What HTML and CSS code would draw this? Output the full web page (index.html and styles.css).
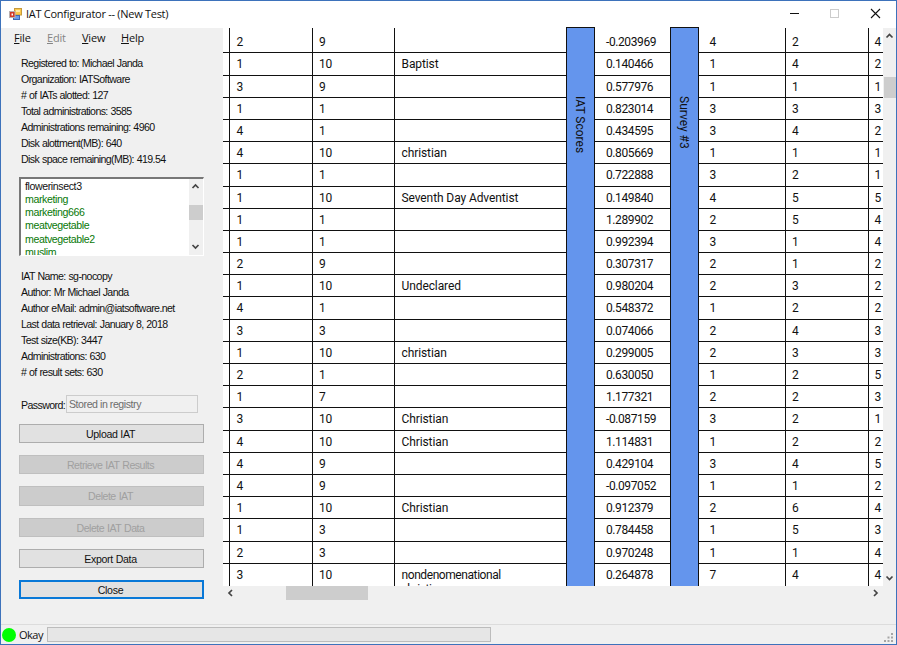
FILE: index.html
```html
<!DOCTYPE html>
<html lang="en">
<head>
<meta charset="utf-8">
<title>IAT Configurator</title>
<link rel="stylesheet" href="styles.css">
</head>
<body>
<div class="window">
  <header class="titlebar">
    <svg class="app-icon" width="13" height="13" viewBox="0 0 13 13">
      <rect x="5.5" y="0.5" width="7" height="6.500" fill="#fbc84c" stroke="#c59a3c"/>
      <rect x="7" y="2" width="4" height="2" fill="#ffe9a8"/>
      <rect x="4.500" y="7.500" width="6" height="4" fill="#6a9bea" stroke="#3c68b4"/>
      <rect x="0.5" y="3.5" width="5.500" height="6" fill="#d33a28" stroke="#b9b0b0"/>
      <rect x="2.500" y="5.500" width="1.500" height="2" fill="#fff"/>
    </svg>
    <span class="title">IAT Configurator -- (New Test)</span>
    <svg class="controls" width="100" height="26" viewBox="0 0 100 26" fill="none">
      <path d="M0 12.5H9" stroke="#111"/>
      <rect x="40.5" y="8.5" width="8" height="8" stroke="#ccc"/>
      <path d="M81 8L90 17M90 8L81 17" stroke="#111" stroke-width="1.1"/>
    </svg>
  </header>
  <main class="body">
    <aside class="side">
      <nav class="menu"><span><u>F</u>ile</span><span class="off"><u>E</u>dit</span><span><u>V</u>iew</span><span><u>H</u>elp</span></nav>
      <div class="info account">
        <p>Registered to: Michael Janda</p><p>Organization: IATSoftware</p><p># of IATs alotted: 127</p><p>Total administrations: 3585</p><p>Administrations remaining: 4960</p><p>Disk alottment(MB): 640</p><p>Disk space remaining(MB): 419.54</p>
      </div>
      <div class="list">
        <div class="items"><p class="sel">flowerinsect3</p><p>marketing</p><p>marketing666</p><p>meatvegetable</p><p>meatvegetable2</p><p>muslim</p></div>
        <div class="list-scroll">
          <svg width="13" height="10" viewBox="0 0 13 10"><path d="M3.500 7L6.500 4L9.500 7" class="arrow"/></svg>
          <i></i>
          <svg width="13" height="10" viewBox="0 0 13 10"><path d="M3.500 3L6.500 6L9.500 3" class="arrow"/></svg>
        </div>
      </div>
      <div class="info details">
        <p>IAT Name: sg-nocopy</p><p>Author: Mr Michael Janda</p><p>Author eMail: admin@iatsoftware.net</p><p>Last data retrieval: January 8, 2018</p><p>Test size(KB): 3447</p><p>Administrations: 630</p><p># of result sets: 630</p>
      </div>
      <div class="password"><span>Password:</span><div class="field">Stored in registry</div></div>
      <div class="buttons">
        <div class="btn">Upload IAT</div><div class="btn disabled">Retrieve IAT Results</div><div class="btn disabled">Delete IAT</div><div class="btn disabled">Delete IAT Data</div><div class="btn">Export Data</div><div class="btn default">Close</div>
      </div>
    </aside>
    <section class="viewer">
      <div class="row">
        <div class="table" id="table"></div>
        <div class="vscroll">
          <svg width="13" height="16" viewBox="0 0 13 16"><path d="M3.500 9.5L6.500 6.5L9.500 9.5" class="arrow"/></svg>
          <i></i>
          <svg width="13" height="16" viewBox="0 0 13 16"><path d="M3.500 6.5L6.500 9.5L9.500 6.5" class="arrow"/></svg>
        </div>
      </div>
      <div class="hscroll">
        <svg width="14" height="14" viewBox="0 0 14 14"><path d="M9 4L6 7L9 10" class="arrow"/></svg>
        <i></i>
        <svg width="14" height="14" viewBox="0 0 14 14"><path d="M5 4L8 7L5 10" class="arrow"/></svg>
      </div>
    </section>
  </main>
  <footer class="status">
    <span class="dot"></span><span class="okay">Okay</span><div class="progress"></div>
    <svg class="grip" width="12" height="12" viewBox="0 0 12 12" fill="#a5a5a5"><path d="M8 1h2v2h-2zM4.500 4.500h2v2h-2zM8 4.500h2v2h-2zM1 8h2v2h-2zM4.500 8h2v2h-2zM8 8h2v2h-2z"/></svg>
  </footer>
</div>
<script src="table.js"></script>
</body>
</html>
```
FILE: table.js
```js
const religion = Array(25).fill('');
Object.assign(religion, {1: 'Baptist', 5: 'christian', 7: 'Seventh Day Adventist', 11: 'Undeclared', 14: 'christian', 17: 'Christian', 18: 'Christian', 21: 'Christian', 24: 'nondenomenational christian'});
const split = s => s.split(' ');
const columns = [
  {cls: 'stub', cells: Array(25).fill('')},
  {cls: 'a', cells: split('2 1 3 1 4 4 1 1 1 1 2 1 4 3 1 2 1 3 4 4 4 1 1 2 3')},
  {cls: 'b', cells: split('9 10 9 1 1 10 1 10 1 1 9 10 1 3 10 1 7 10 10 9 9 10 3 3 10')},
  {cls: 'c', cells: religion},
  {band: 'IAT Scores'},
  {cls: 'score', cells: split('-0.203969 0.140466 0.577976 0.823014 0.434595 0.805669 0.722888 0.149840 1.289902 0.992394 0.307317 0.980204 0.548372 0.074066 0.299005 0.630050 1.177321 -0.087159 1.114831 0.429104 -0.097052 0.912379 0.784458 0.970248 0.264878')},
  {band: 'Survey #3'},
  {cls: 'd', cells: split('4 1 1 3 3 1 3 4 2 3 2 2 1 2 2 1 2 3 1 3 1 2 1 1 7')},
  {cls: 'e', cells: split('2 4 1 3 4 1 2 5 5 1 1 3 2 4 3 2 2 2 2 4 1 6 5 1 4')},
  {cls: 'f', cells: split('4 2 1 3 2 1 1 5 4 4 2 2 2 3 3 5 3 1 2 5 2 4 3 4 4')}
];
document.getElementById('table').innerHTML = columns.map(c => c.band
  ? `<div class="band"><span>${c.band}</span></div>`
  : `<div class="col ${c.cls}">${c.cells.map(v => `<div class="cell">${v}</div>`).join('')}</div>`).join('');
```
FILE: styles.css
```css
* { box-sizing: border-box; }
body { margin: 0; font-family: "Liberation Sans", sans-serif; font-size: 11px; color: #111; }
p { margin: 0; }
.window { width: 897px; height: 645px; border: 1px solid #3d72bb; background: #f0f0f0; display: flex; flex-direction: column; overflow: hidden; }
.titlebar { height: 27px; flex: none; background: #fff; display: flex; align-items: center; padding: 0 0 1px 8px; }
.title { font: 11px "Open Sans", sans-serif; margin: -1px 0 0 4px; letter-spacing: -0.28px; }
.controls { margin-left: auto; margin-right: 6px; }
.body { flex: none; height: 596px; display: flex; }
.side { width: 222px; padding-left: 18px; display: flex; flex-direction: column; }
.menu { height: 22px; width: 135px; margin-left: -6px; display: flex; line-height: 20px; font-family: "Open Sans", sans-serif; letter-spacing: -0.2px; }
.menu span { flex: none; width: 35px; padding-left: 1px; }
.menu span:nth-child(1) { width: 33px; }
.menu span:nth-child(3) { width: 39px; }
.menu .off { color: #858585; }
.info { font-size: 10.6px; line-height: 16px; letter-spacing: -0.6px; word-spacing: 0.4px; padding-left: 2px; white-space: nowrap; }
.account { margin-top: 5px; }
.list { margin-top: 10px; width: 185px; height: 79px; border: 1px solid #fff; border-top: 2px solid #777; border-left: 2px solid #777; background: #fff; display: flex; flex: none; overflow: hidden; }
.items { flex: 1; padding: 0.5px 0 0 4px; font-size: 10.6px; letter-spacing: -0.4px; line-height: 13.3px; color: #087808; height: 76px; overflow: hidden; }
.items .sel { color: #111; }
.list-scroll { width: 14px; background: #f0f0f0; display: flex; flex-direction: column; padding: 2px 0 3px; }
.list-scroll i { margin: 14px 0 auto; height: 15px; background: #cdcdcd; }
.arrow { fill: none; stroke: #444; stroke-width: 1.7; }
.details { margin-top: 12px; }
.password { margin-top: 14px; height: 19px; display: flex; align-items: center; padding-left: 2px; font-size: 10.6px; letter-spacing: -0.45px; }
.password span { width: 45px; flex: none; padding-top: 2px; letter-spacing: -0.6px; }
.field { width: 132px; height: 18px; border: 1px solid #ccc; line-height: 17px; padding-left: 2px; color: #6d6d6d; }
.buttons { margin-top: 11px; display: flex; flex-direction: column; gap: 12px; width: 185px; }
.btn { height: 19.2px; border: 1px solid #adadad; background: #e1e1e1; text-align: center; line-height: 19px; font-size: 10.6px; letter-spacing: -0.3px; padding-right: 2px; }
.disabled { background: #ccc; border-color: #bfbfbf; color: #a0a0a0; letter-spacing: -0.5px; word-spacing: 0.5px; }
.default { border: 2px solid #0878d7; line-height: 17px; }
.viewer { width: 673px; }
.row { display: flex; height: 558px; }
.table { width: 660px; height: 558px; background: #fff; display: flex; font: 12px Roboto, sans-serif; }
.col { flex: none; overflow: hidden; border-left: 1px solid #111; }
.cell { height: 22.2px; border-bottom: 1px solid #111; line-height: 23px; padding-left: 6.5px; white-space: nowrap; letter-spacing: -0.2px; }
.cell:first-child { height: 25.4px; padding-top: 3px; }
.cell:last-child { line-height: 14px; padding-top: 4.5px; height: 40px; }
.stub { width: 6px; border-left: 0; }
.a { width: 83px; } .b { width: 82px; } .c { width: 172px; } .b .cell { padding-left: 6px; }
.c .cell { letter-spacing: -0.1px; }
.c .cell:last-child { padding-right: 55px; white-space: normal; letter-spacing: -0.42px; }
.score { width: 75px; border-left: 0; } .score .cell { padding-left: 11px; letter-spacing: -0.4px; }
.d { width: 86px; border-left: 0; } .d .cell { padding-left: 10.5px; }
.e { width: 83px; } .e .cell { padding-left: 6px; } .f { width: 15px; } .f .cell { padding-left: 5.5px; }
.band { width: 29px; flex: none; background: #6495ed; border: 1px solid #111; border-bottom: 0; padding: 67px 0 0 5px; margin-top: -1px; }
.band span { display: block; writing-mode: vertical-rl; line-height: 15px; margin-top: 1px; }
.vscroll { width: 13px; display: flex; flex-direction: column; }
.vscroll i { margin: 33px 0 auto 1px; height: 21px; background: #cdcdcd; }
.hscroll { display: flex; width: 660px; }
.hscroll i { width: 82px; height: 14px; margin: 0 auto 0 49px; background: #cdcdcd; }
.status { height: 20px; border-top: 1px solid #dcdcdc; display: flex; align-items: center; }
.dot { width: 14px; height: 14px; border-radius: 50%; background: #0f0; margin-left: 1px; }
.okay { font-family: "Open Sans", sans-serif; margin-left: 3px; width: 28px; letter-spacing: -0.5px; }
.progress { width: 444px; height: 15px; background: #e6e6e6; border: 1px solid #bcbcbc; }
.grip { margin: 6px 1px 0 auto; }
```
